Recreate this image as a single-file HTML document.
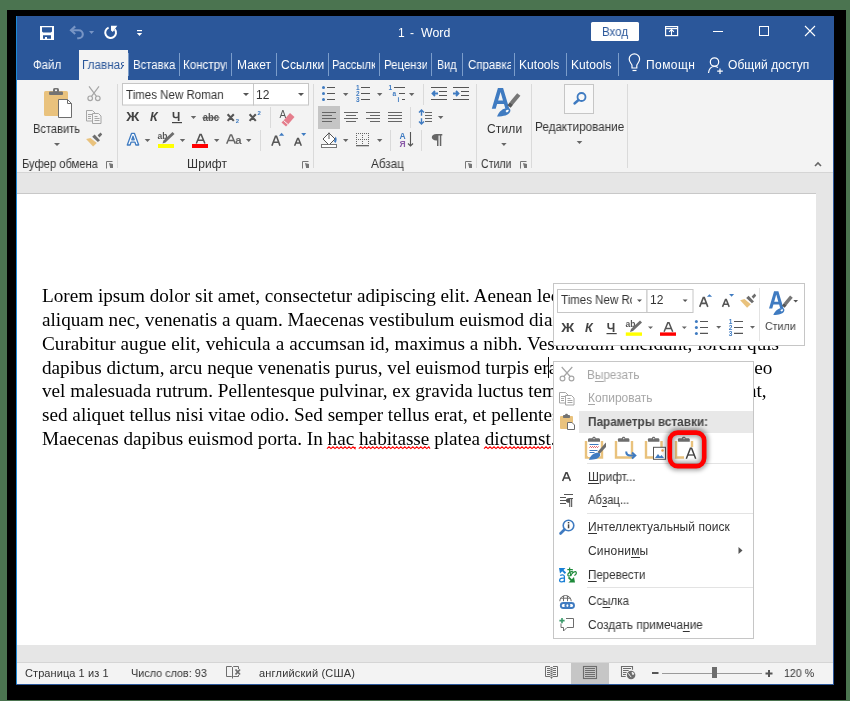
<!DOCTYPE html>
<html><head><meta charset="utf-8">
<style>
*{box-sizing:border-box;margin:0;padding:0}
html,body{width:850px;height:701px;overflow:hidden;background:#4b7450;font-family:"Liberation Sans",sans-serif}
.a{position:absolute}
.tx{position:absolute;white-space:nowrap;line-height:1}
.tx u{text-decoration:none;border-bottom:1px solid currentColor;display:inline-block;line-height:1;padding-bottom:0}
svg{position:absolute;overflow:visible}
.sep{position:absolute;width:1px;background:#6687ba}
.rs{position:absolute;width:1px;background:#dadada}
.dd{position:absolute;width:0;height:0;border-left:3px solid transparent;border-right:3px solid transparent;border-top:3px solid #666}
.ln{position:absolute;left:41.5px;white-space:nowrap;font-family:"Liberation Serif",serif;font-size:19.2px;line-height:19px;color:#000}
.tx,.ln,svg{will-change:transform}
</style></head><body>
<div class="a" style="left:7px;top:10px;width:839px;height:690px;background:#000"></div>
<div class="a" style="left:16px;top:16px;width:818px;height:669px;background:#e6e6e6"></div>
<!-- title + tabs -->
<div class="a" style="left:16px;top:16px;width:818px;height:64px;background:#2b579a"></div>
<div class="a" style="left:16px;top:16px;width:1px;height:669px;background:#1c8ad6"></div>
<div class="a" style="left:79px;top:50px;width:49px;height:30px;background:#f3f3f3"></div>
<!-- ribbon -->
<div class="a" style="left:17px;top:80px;width:816px;height:92px;background:#f3f3f3"></div>
<div class="a" style="left:17px;top:172px;width:816px;height:1px;background:#d5d5d5"></div>
<!-- page -->
<div class="a" style="left:17px;top:193px;width:799px;height:1px;background:#c8c8c8"></div>
<div class="a" style="left:17px;top:194px;width:799px;height:451px;background:#fff"></div>
<!-- status -->
<div class="a" style="left:17px;top:662px;width:816px;height:1px;background:#d5d5d5"></div>
<div class="a" style="left:17px;top:663px;width:816px;height:21px;background:#f3f3f3"></div>
<div class="a" style="left:16px;top:684px;width:818px;height:1px;background:#2b579a"></div>
<div class="a" style="left:833px;top:16px;width:1px;height:669px;background:#2b579a"></div>
<!-- save -->
<svg style="left:0;top:0" width="850" height="80" viewBox="0 0 850 80">
<g fill="#fff">
<path d="M40 26h14v14h-14z M42 27.2v4.2l1.1 1.1h7.8l1.1-1.1v-4.2z M43 35.3v3.5h2v-1.8h2v1.8h4v-3.5z" fill-rule="evenodd"/>
</g>
<!-- undo -->
<g fill="none" stroke="#7895c5" stroke-width="2.1">
<path d="M71.5 30.2h7.3a4 4 0 0 1 0 8h-1.6"/>
<path d="M75.2 26.4l-4.2 3.8 4.2 3.8"/>
</g>
<path d="M89 31h5.1l-2.55 3z" fill="#7895c5"/>
<!-- repeat -->
<path d="M108.6 27.6A5.4 5.4 0 1 0 114.9 29.3" fill="none" stroke="#fff" stroke-width="2"/>
<path d="M111 25.8h6.3l-4.5 6.2-1.8-1.6z" fill="#fff"/>
<!-- qat -->
<rect x="137" y="30" width="5" height="1.2" fill="#fff"/>
<path d="M136.8 33h5.4l-2.7 3z" fill="#fff"/>
<!-- sign in button -->
<rect x="591" y="22" width="48" height="19" rx="1.5" fill="#fff"/>
<!-- ribbon display options -->
<g fill="none" stroke="#fff" stroke-width="1.2">
<rect x="665.6" y="26.6" width="12" height="9"/>
</g>
<rect x="665" y="28" width="13" height="1.2" fill="#fff"/>
<path d="M671.5 29.5v6.3M669.1 31.9l2.4-2.4 2.4 2.4" fill="none" stroke="#fff" stroke-width="1.1"/>
<!-- min max close -->
<rect x="713" y="31" width="10" height="1" fill="#fff"/>
<rect x="759.5" y="26.5" width="9" height="9" fill="none" stroke="#fff" stroke-width="1"/>
<path d="M805 26l10 10M815 26l-10 10" stroke="#fff" stroke-width="1.1"/>
<!-- tab separators -->
<g fill="#7b9dcb">
<rect x="179" y="53" width="1" height="23"/>
<rect x="231" y="53" width="1" height="23"/>
<rect x="276" y="53" width="1" height="23"/>
<rect x="328" y="53" width="1" height="23"/>
<rect x="379" y="53" width="1" height="23"/>
<rect x="431" y="53" width="1" height="23"/>
<rect x="462" y="53" width="1" height="23"/>
<rect x="514" y="53" width="1" height="23"/>
<rect x="566" y="53" width="1" height="23"/>
<rect x="618" y="53" width="1" height="23"/>
<rect x="128" y="53" width="1" height="23"/>
</g>
<!-- lightbulb -->
<g fill="none" stroke="#fff" stroke-width="1.2">
<path d="M632 68v-2.5c0-1.5-2.8-3.2-2.8-6.5a5.2 5.2 0 0 1 10.4 0c0 3.3-2.8 5-2.8 6.5v2.5z"/>
<path d="M632.5 70.5h4"/>
</g>
<!-- person -->
<g fill="none" stroke="#fff" stroke-width="1.2">
<circle cx="714.5" cy="62" r="4.2"/>
<path d="M708.5 73c0.5-4 3-6.5 6-6.5c1.5 0 2.5 0.4 3.5 1"/>
<path d="M720 68.5v5.5M717.2 71.2h5.6"/>
</g>
</svg>

<svg style="left:0;top:0" width="850" height="180" viewBox="0 0 850 180">
<!-- group separators -->
<g fill="#dadada">
<rect x="117" y="84" width="1" height="84"/>
<rect x="313" y="84" width="1" height="84"/>
<rect x="476" y="84" width="1" height="84"/>
<rect x="531" y="84" width="1" height="84"/>
<rect x="627" y="84" width="1" height="84"/>
<rect x="270" y="107" width="1" height="21"/>
<rect x="260" y="130" width="1" height="21"/>
<rect x="423" y="84" width="1" height="21"/>
<rect x="410" y="107" width="1" height="21"/>
<rect x="390" y="130" width="1" height="21"/>
<rect x="421" y="130" width="1" height="21"/>
</g>
<!-- launchers -->
<g fill="none" stroke="#777" stroke-width="1">
<path d="M106.5 168.5v-7h6M302.5 168.5v-7h6M465.5 168.5v-7h6M520.5 168.5v-7h6"/>
</g>
<g fill="#777">
<path d="M109 163l4 4v-3zM109 163l4 4h-3z M305 163l4 4v-3zM305 163l4 4h-3z M468 163l4 4v-3zM468 163l4 4h-3z M523 163l4 4v-3zM523 163l4 4h-3z"/>
<rect x="110" y="166" width="3" height="2"/><rect x="306" y="166" width="3" height="2"/><rect x="469" y="166" width="3" height="2"/><rect x="524" y="166" width="3" height="2"/>
</g>
<!-- paste -->
<rect x="44" y="91" width="24" height="25" rx="1.5" fill="#e9c27d"/>
<rect x="49" y="91.5" width="14" height="3.5" rx="1" fill="#737373"/>
<rect x="53" y="88" width="6" height="4.5" rx="1.5" fill="#737373"/>
<rect x="55" y="89.5" width="2" height="1.6" fill="#f3f3f3"/>
<path d="M58.5 99.5h9l4 4v14h-13z" fill="#fff" stroke="#6d6d6d" stroke-width="1"/>
<path d="M67.5 99.5v4h4" fill="none" stroke="#6d6d6d" stroke-width="1"/>
<path d="M54 143h6l-3 3z" fill="#666"/>
<!-- scissors -->
<g fill="none" stroke="#a6a6a6" stroke-width="1.2">
<circle cx="90.2" cy="98.3" r="2.3"/><circle cx="97.8" cy="98.3" r="2.3"/>
<path d="M91.5 96.3l7.5-10M96.5 96.3l-7.5-10"/>
</g>
<!-- copy -->
<g fill="#f3f3f3" stroke="#a6a6a6" stroke-width="1">
<path d="M86.5 110.5h6l2.5 2.5v8h-8.5z"/>
<path d="M92.5 113.5h6l2.5 2.5v7.5h-8.5z"/>
</g>
<g stroke="#a6a6a6" stroke-width="1">
<path d="M88 114.5h4M88 116.5h3M88 118.5h3M94.5 118.5h5M94.5 120.5h5M94.5 116.5h3"/>
</g>
<!-- format painter -->
<path d="M86.1 139.1L90.5 137.9L96.8 143L93.1 146.6Z" fill="#e9c27d"/>
<path d="M92.2 136.7L94.6 134.6L100 140.3L97.9 142Z" fill="#6d6d6d"/>
<path d="M97.6 135.3L100.6 132.4L102.2 134.6L99.4 137.6Z" fill="#6d6d6d"/>
<!-- font name / size boxes -->
<rect x="122.5" y="83.5" width="131" height="21.5" fill="#fff" stroke="#c6c6c6" stroke-width="1"/>
<rect x="253.5" y="83.5" width="55" height="21.5" fill="#fff" stroke="#c6c6c6" stroke-width="1"/>
<g fill="#555">
<path d="M243 93h6l-3 3z"/><path d="M298 93h6l-3 3z"/>
</g>
<!-- dropdown arrows -->
<g fill="#666">
<path d="M190.8 116h5.4l-2.7 3z"/>
<path d="M144.7 139h5.6l-2.8 3z"/><path d="M179.8 139h5.4l-2.7 3z"/><path d="M214 139h5.4l-2.7 3z"/><path d="M246 139h5.4l-2.7 3z"/>
<path d="M343 93h5.4l-2.7 3z"/><path d="M377 93h5.4l-2.7 3z"/><path d="M409 93h5.4l-2.7 3z"/>
<path d="M438 116h5.4l-2.7 3z"/>
<path d="M343 139h5.4l-2.7 3z"/><path d="M377 139h5.4l-2.7 3z"/>
<path d="M501.2 143h5.4l-2.7 3z"/><path d="M576.7 141h5.6l-2.8 3z"/>
<path d="M815 166l3-3 3 3" fill="none" stroke="#666" stroke-width="1.6"/>
</g>
<!-- B I U -->
<text x="126.3" y="121" font-family="Liberation Sans" font-weight="700" font-size="12.5" fill="#444" textLength="13" lengthAdjust="spacingAndGlyphs">Ж</text>
<text x="150" y="121" font-family="Liberation Sans" font-weight="700" font-style="italic" font-size="12.5" fill="#444">К</text>
<text x="172" y="121" font-family="Liberation Sans" font-weight="700" font-size="12.5" fill="#444" textLength="8.3" lengthAdjust="spacingAndGlyphs">Ч</text>
<rect x="172" y="122" width="10" height="1.2" fill="#444"/>
<!-- abc strike -->
<text x="202.8" y="121" font-family="Liberation Sans" font-weight="700" font-size="11.5" fill="#555" textLength="16.2" lengthAdjust="spacingAndGlyphs">abc</text>
<rect x="202.5" y="117.3" width="17" height="1.1" fill="#555"/>
<!-- x2 x2 -->
<path d="M227.6 114.3l6.2 6.6M233.8 114.3l-6.2 6.6 M249.6 114.3l6.2 6.6M255.8 114.3l-6.2 6.6" stroke="#555" stroke-width="2.1"/>
<text x="235.8" y="123" font-family="Liberation Sans" font-weight="700" font-size="6" fill="#3f7bc1">2</text>
<text x="257.6" y="115" font-family="Liberation Sans" font-weight="700" font-size="6" fill="#3f7bc1">2</text>
<!-- clear formatting -->
<text x="279.5" y="118" font-family="Liberation Sans" font-size="10" fill="#555">A</text>
<path d="M283.5 120.5l6.5-7.5 4.5 4-6.5 7.5z" fill="#e57d8c"/>
<path d="M281.5 122.5l2-2 4.5 4-2 2z" fill="#e57d8c"/>
<path d="M283.5 120.5l4.5 4" stroke="#f3f3f3" stroke-width="1"/>
<!-- text effects A -->
<path d="M127.3 145L131.6 133.3H134.4L138.7 145H135.9L135 142.2H131L130.1 145Z M131.8 139.8H134.2L133 136.2Z" fill="#fff" stroke="#3f7bc1" stroke-width="1.3" stroke-linejoin="round" fill-rule="evenodd"/>
<!-- highlighter -->
<text x="157.6" y="138.5" font-family="Liberation Sans" font-weight="700" font-size="8.5" fill="#555">ab</text>
<path d="M162.5 143.5l1-3 9-8.5 2 2-9 8.5z" fill="#6d6d6d"/>
<rect x="158" y="144" width="16" height="4" fill="#ffff00"/>
<!-- font color -->
<path d="M196.3 143.5L200 134.6H201.2L204.9 143.5 M197.8 140.3h5.6" fill="none" stroke="#555" stroke-width="1.5"/>
<rect x="192" y="144" width="16" height="4" fill="#f00"/>
<!-- Aa -->
<path d="M226.7 143.7L230.4 135H231.6L235.3 143.7 M228.2 140.5h5.6" fill="none" stroke="#666" stroke-width="1.5"/>
<text x="235.2" y="143.7" font-family="Liberation Sans" font-weight="700" font-size="10" fill="#666" textLength="6.3" lengthAdjust="spacingAndGlyphs">a</text>
<!-- grow / shrink -->
<path d="M271.9 145.7L275.5 136.3H276.5L280 145.7 M273.5 142.2h5" fill="none" stroke="#555" stroke-width="1.6"/>
<path d="M279 135.8l2.6-3 2.6 3z" fill="#3f7bc1"/>
<path d="M294.6 145.7L297.6 138.5H298.4L301.3 145.7 M295.9 143h4.2" fill="none" stroke="#555" stroke-width="1.5"/>
<path d="M301.2 132.9h5l-2.5 3z" fill="#3f7bc1"/>
<!-- bullets -->
<g fill="#3f7bc1"><circle cx="323.5" cy="87.5" r="1.5"/><circle cx="323.5" cy="93.5" r="1.5"/><circle cx="323.5" cy="99.5" r="1.5"/></g>
<g stroke="#555" stroke-width="1.1"><path d="M327 87.5h8M327 93.5h8M327 99.5h8"/></g>
<!-- numbering -->
<g font-family="Liberation Sans" font-weight="700" font-size="6.5" fill="#3f7bc1">
<text x="356" y="90">1</text><text x="356" y="96">2</text><text x="356" y="102">3</text>
<text x="388.5" y="90">1</text><text x="392.5" y="96">a</text><text x="397.5" y="102">i</text>
</g>
<g stroke="#555" stroke-width="1.1"><path d="M361 87.5h9M361 93.5h9M361 99.5h9 M394 87.5h11M399 93.5h6M402 99.5h3"/></g>
<!-- indent -->
<g stroke="#555" stroke-width="1.1"><path d="M431 87.5h16M439 91.5h8M439 95.5h8M431 99.5h16 M453 87.5h16M461 91.5h8M461 95.5h8M453 99.5h16"/></g>
<g fill="none" stroke="#3f7bc1" stroke-width="1.8"><path d="M438 93.5h-5.5M435 91l-2.5 2.5 2.5 2.5 M453 93.5h5.5M456 91l2.5 2.5-2.5 2.5"/></g>
<!-- align -->
<rect x="318" y="106" width="22" height="23" fill="#c5c5c5"/>
<g stroke="#666" stroke-width="1.1">
<path d="M322 112.5h14M322 115.5h10M322 118.5h14M322 121.5h10"/>
<path d="M344 112.5h14M346 115.5h10M344 118.5h14M346 121.5h10"/>
<path d="M366 112.5h14M370 115.5h10M366 118.5h14M370 121.5h10"/>
<path d="M388 112.5h14M388 115.5h14M388 118.5h14M388 121.5h14"/>
<path d="M425 112.5h7M425 115.5h7M425 118.5h7M425 121.5h7"/>
</g>
<g fill="none" stroke="#3f7bc1" stroke-width="1.4"><path d="M421.5 110v5.8M421.5 118.2v5.8M419 112.5l2.5-2.5 2.5 2.5M419 121.5l2.5 2.5 2.5-2.5"/></g>
<!-- shading -->
<path d="M329 133l6 6-6 6-6-6z" fill="#fff" stroke="#555" stroke-width="1"/>
<path d="M329 139v-6.5" stroke="#555" stroke-width="1"/>
<path d="M335.5 136.5c1.5 1.5 1.5 4 0 6.5l-1.5-1.5z" fill="#3f7bc1"/>
<rect x="321.5" y="144.5" width="15" height="3" fill="#fff" stroke="#777" stroke-width="1"/>
<!-- borders -->
<g fill="#666"><path d="M356 133h1v1h-1zM356 139h1v1h-1zM358 133h1v1h-1zM358 139h1v1h-1zM360 133h1v1h-1zM360 139h1v1h-1zM362 133h1v1h-1zM362 139h1v1h-1zM364 133h1v1h-1zM364 139h1v1h-1zM366 133h1v1h-1zM366 139h1v1h-1zM368 133h1v1h-1zM368 139h1v1h-1zM356 135h1v1h-1zM362 135h1v1h-1zM368 135h1v1h-1zM356 137h1v1h-1zM362 137h1v1h-1zM368 137h1v1h-1zM356 139h1v1h-1zM362 139h1v1h-1zM368 139h1v1h-1zM356 141h1v1h-1zM362 141h1v1h-1zM368 141h1v1h-1zM356 143h1v1h-1zM362 143h1v1h-1zM368 143h1v1h-1z"/>
<rect x="356" y="145" width="13" height="1.3"/></g>
<!-- sort -->
<text x="399.5" y="138.7" font-family="Liberation Sans" font-weight="700" font-size="8.5" fill="#3f7bc1">A</text>
<text x="399.5" y="146.6" font-family="Liberation Sans" font-weight="700" font-size="8.5" fill="#8a5aa8">Я</text>
<g fill="none" stroke="#555" stroke-width="1.1"><path d="M410.5 132v14M408 143.5l2.5 2.5 2.5-2.5"/></g>
<!-- pilcrow -->
<path d="M438.5 134h3.8v1.5h-1v10.6h-1.5v-10.6h-1.3v10.6h-1.5v-5.6h-0.6c-2.8 0-4.6-1.3-4.6-3.2s1.8-3.3 4.6-3.3z" fill="#666"/>
<!-- styles -->
<path d="M491.8 108.8L497.9 88H503.1L509.3 108.8H505.4L504 104H497.1L495.7 108.8Z M498.1 100.6H503L500.55 92Z" fill="#3f7bc1" fill-rule="evenodd"/>
<path d="M518.8 94.5l-7.5 9" stroke="#777" stroke-width="4.2"/>
<path d="M511.5 103.5l-2.5 3" stroke="#555" stroke-width="4.2"/>
<path d="M497 116.6c2-5 6-8.5 10.5-8.5 2.5 0 3.5 2 2.5 4-1.5 3-6 4.5-13 4.5z" fill="#3f7bc1"/>
<path d="M505.5 111c1-1.2 2.5-1.5 3.2-1 0.3 0.8-0.5 2-2 2.5z" fill="#fff"/>
<!-- editing search -->
<rect x="564.5" y="84.5" width="29" height="29" fill="#f8f8f8" stroke="#c6c6c6" stroke-width="1"/>
<circle cx="581.5" cy="97" r="4" fill="none" stroke="#3f7bc1" stroke-width="1.8"/>
<path d="M578.5 100l-4 3.5" stroke="#3f7bc1" stroke-width="2.4" stroke-linecap="round"/>
</svg>

<div class="ln" style="top:286px">Lorem ipsum dolor sit amet, consectetur adipiscing elit. Aenean leo ligula, rhoncus eget tristique</div>
<div class="ln" style="top:310px">aliquam nec, venenatis a quam. Maecenas vestibulum euismod diam, sed luctus lectus gravida a.</div>
<div class="ln" style="top:334px;word-spacing:0.2px">Curabitur augue elit, vehicula a accumsan id, maximus a nibh. Vestibulum tincidunt, lorem quis</div>
<div class="ln" style="top:358px">dapibus dictum, arcu neque venenatis purus, vel euismod turpis erat in ante. Integer ac mi</div>
<div class="ln" style="top:381px">vel malesuada rutrum. Pellentesque pulvinar, ex gravida luctus tempus, nibh mi feugiat</div>
<div class="ln" style="top:405px">sed aliquet tellus nisi vitae odio. Sed semper tellus erat, et pellentesque lorem dictum et.</div>
<div class="ln" style="top:429px">Maecenas dapibus euismod porta. In hac habitasse platea dictumst.</div>
<div class="a" style="left:548px;top:357px;width:1px;height:21px;background:#000"></div>
<div class="ln" style="top:358px;left:748.5px">leo</div>
<div class="ln" style="top:381px;left:747.5px">at,</div>
<svg style="left:0;top:0" width="850" height="701" viewBox="0 0 850 701"><path d="M327 448.6L329.0 446.8L331.0 448.6L333.0 446.8L335.0 448.6L337.0 446.8L339.0 448.6L341.0 446.8L343.0 448.6L345.0 446.8L347.0 448.6L349.0 446.8L351.0 448.6L353.0 446.8L355.0 448.6L355.3 446.8 M358.8 448.6L360.8 446.8L362.8 448.6L364.8 446.8L366.8 448.6L368.8 446.8L370.8 448.6L372.8 446.8L374.8 448.6L376.8 446.8L378.8 448.6L380.8 446.8L382.8 448.6L384.8 446.8L386.8 448.6L388.8 446.8L390.8 448.6L392.8 446.8L394.8 448.6L396.8 446.8L398.8 448.6L400.8 446.8L402.8 448.6L404.8 446.8L406.8 448.6L408.8 446.8L410.8 448.6L412.8 446.8L414.8 448.6L416.8 446.8L418.8 448.6L420.8 446.8L422.8 448.6L424.8 446.8L426.8 448.6L428.8 446.8L430.0 448.6 M484 448.6L486.0 446.8L488.0 448.6L490.0 446.8L492.0 448.6L494.0 446.8L496.0 448.6L498.0 446.8L500.0 448.6L502.0 446.8L504.0 448.6L506.0 446.8L508.0 448.6L510.0 446.8L512.0 448.6L514.0 446.8L516.0 448.6L518.0 446.8L520.0 448.6L522.0 446.8L524.0 448.6L526.0 446.8L528.0 448.6L530.0 446.8L532.0 448.6L534.0 446.8L536.0 448.6L538.0 446.8L540.0 448.6L542.0 446.8L544.0 448.6L546.0 446.8L548.0 448.6L550.0 446.8L550.5 448.6" fill="none" stroke="#ff0000" stroke-width="1.1"/></svg>

<svg style="left:0;top:0" width="850" height="701" viewBox="0 0 850 701">
<rect x="571" y="663" width="38" height="21" fill="#c6c6c6"/>
<g fill="none" stroke="#6d6d6d" stroke-width="1">
<!-- proofing -->
<path d="M232.5 667.5l-1-1h-5v10h5l1 1 1-1h5v-10h-5z M232.5 667.5v11" />
<!-- read mode -->
<path d="M550 666.5h-4.5v10h4.5 M553 666.5h4.5v10h-4.5" />
<path d="M547 668.5h3M547 670.5h3M547 672.5h3M547 674.5h3M553 668.5h3M553 670.5h3M553 672.5h3M553 674.5h3"/>
</g>
<rect x="235" y="669" width="5.5" height="6" fill="#f3f3f3"/>
<path d="M235.5 669.5l4.5 5M240 669.5l-4.5 5" stroke="#6d6d6d" stroke-width="1.8"/>
<path d="M550.5 667h2v10.5l-1 1.5-1-1.5z" fill="#6d6d6d"/>
<path d="M550.5 668.5h2M550.5 670.5h2M550.5 672.5h2M550.5 674.5h2M550.5 676.5h2" stroke="#f3f3f3" stroke-width="0.6"/>
<!-- print layout -->
<rect x="583.5" y="666.5" width="13" height="12" fill="none" stroke="#6d6d6d" stroke-width="1.1"/>
<path d="M585 668.5h10M585 670.5h10M585 672.5h10M585 674.5h10M585 676.5h10" stroke="#6d6d6d" stroke-width="1"/>
<!-- web layout -->
<path d="M625.7 676.5h-4.2v-10h11v3.2" fill="none" stroke="#6d6d6d" stroke-width="1.1"/>
<path d="M623 668.5h8M623 670.5h5.7M623 672.5h3.6M623 674.5h2.9" stroke="#6d6d6d" stroke-width="1"/>
<circle cx="631.1" cy="675" r="4.3" fill="#6d6d6d"/>
<path d="M628.4 673.3c0.8 1.5 1.5 2.5 2.8 3.8M632 672.2c1 0.2 1.6 0.8 2 1.8l-1.4 0.4z" stroke="#f3f3f3" stroke-width="0.9" fill="#f3f3f3"/>
<!-- zoom -->
<rect x="652" y="672" width="6.5" height="2" fill="#555"/>
<rect x="662" y="673" width="100" height="1" fill="#9a9a9a"/>
<rect x="712" y="667" width="5" height="11" fill="#6d6d6d"/>
<rect x="765.5" y="672.5" width="7" height="2" fill="#555"/>
<rect x="768" y="670" width="2" height="7" fill="#555"/>
</svg>

<div class="a" style="left:553px;top:283px;width:252px;height:63px;background:#fff;border:1px solid #c6c6c6"></div>
<svg style="left:0;top:0" width="850" height="701" viewBox="0 0 850 701">
<rect x="557.5" y="289.5" width="89.5" height="23" fill="#fff" stroke="#c6c6c6" stroke-width="1"/>
<rect x="647" y="289.5" width="46" height="23" fill="#fff" stroke="#c6c6c6" stroke-width="1"/>
<g fill="#555"><path d="M637 299.5h5l-2.5 2.5z"/><path d="M682.6 299.5h5l-2.5 2.5z"/></g>
<rect x="759" y="288" width="1" height="53" fill="#e3e3e3"/>
<!-- grow shrink -->
<path d="M699.7 306.9L703.3 297.6H704.3L707.8 306.9 M701.3 303.4h5" fill="none" stroke="#555" stroke-width="1.6"/>
<path d="M706.9 296.8l2.6-2.6 2.6 2.6z" fill="#3f7bc1"/>
<path d="M722.5 306.9L725.5 299.6H726.3L729.2 306.9 M723.8 304.2h4.2" fill="none" stroke="#555" stroke-width="1.5"/>
<path d="M729.1 294.1h5l-2.5 2.7z" fill="#3f7bc1"/>
<!-- format painter -->
<path d="M 740.1 300.3 L 744.5 299.1 L 750.8 304.2 L 747.1 307.8 Z" fill="#e9c27d"/>
<path d="M 746.2 297.9 L 748.6 295.8 L 754.0 301.5 L 751.9 303.2 Z" fill="#6d6d6d"/>
<path d="M 751.6 296.5 L 754.6 293.6 L 756.2 295.8 L 753.4 298.8 Z" fill="#6d6d6d"/>
<!-- styles -->
<g transform="translate(360.81,218.16) scale(0.83)">
<path d="M491.8 108.8L497.9 88H503.1L509.3 108.8H505.4L504 104H497.1L495.7 108.8Z M498.1 100.6H503L500.55 92Z" fill="#3f7bc1" fill-rule="evenodd"/>
<path d="M518.8 94.5l-7.5 9" stroke="#777" stroke-width="4.2"/>
<path d="M511.5 103.5l-2.5 3" stroke="#555" stroke-width="4.2"/>
<path d="M497 116.6c2-5 6-8.5 10.5-8.5 2.5 0 3.5 2 2.5 4-1.5 3-6 4.5-13 4.5z" fill="#3f7bc1"/>
<path d="M505.5 111c1-1.2 2.5-1.5 3.2-1 0.3 0.8-0.5 2-2 2.5z" fill="#fff"/>
</g>
<path d="M793.3 300h4.8l-2.4 2.5z" fill="#555"/>
<!-- B I U -->
<text x="561.3" y="331.9" font-family="Liberation Sans" font-weight="700" font-size="12.5" fill="#444" textLength="13" lengthAdjust="spacingAndGlyphs">Ж</text>
<text x="585" y="331.9" font-family="Liberation Sans" font-weight="700" font-style="italic" font-size="12.5" fill="#444">К</text>
<text x="606.8" y="331.9" font-family="Liberation Sans" font-weight="700" font-size="12.5" fill="#444" textLength="8.5" lengthAdjust="spacingAndGlyphs">Ч</text>
<rect x="606.5" y="333" width="10.2" height="1.2" fill="#444"/>
<!-- highlighter -->
<text x="625.6" y="327" font-family="Liberation Sans" font-weight="700" font-size="8.5" fill="#555">ab</text>
<path d="M630 332l1-3 9-8.5 2 2-9 8.5z" fill="#6d6d6d"/>
<rect x="625.8" y="332.4" width="16.2" height="3.4" fill="#ffff00"/>
<path d="M648 326.5h5l-2.5 2.5z" fill="#666"/>
<!-- font color -->
<path d="M664.1 331.8L667.8 322.7H669L672.7 331.8 M665.6 328.6h5.6" fill="none" stroke="#555" stroke-width="1.5"/>
<rect x="660" y="332.4" width="16" height="3.4" fill="#f00"/>
<path d="M681.8 326.5h5l-2.5 2.5z" fill="#666"/>
<!-- bullets -->
<g fill="#3f7bc1"><circle cx="696.4" cy="321.5" r="1.5"/><circle cx="696.4" cy="327.5" r="1.5"/><circle cx="696.4" cy="333.4" r="1.5"/></g>
<g stroke="#555" stroke-width="1.1"><path d="M700 321.5h8M700 327.5h8M700 333.4h8 M734 321.5h9M734 327.5h9M734 333.4h9"/></g>
<g font-family="Liberation Sans" font-weight="700" font-size="6.5" fill="#3f7bc1"><text x="728.7" y="324">1</text><text x="728.7" y="330">2</text><text x="728.7" y="336">3</text></g>
<g fill="#666"><path d="M716.2 326.1h5l-2.5 2.6z"/><path d="M750 326.1h5l-2.5 2.6z"/></g>
</svg>

<div class="a" style="left:553px;top:361px;width:201px;height:278px;background:#fff;border:1px solid #c6c6c6"></div>
<div class="a" style="left:579px;top:411px;width:174px;height:22px;background:#e8e8e8"></div>
<svg style="left:0;top:0" width="850" height="701" viewBox="0 0 850 701">
<!-- separators -->
<g fill="#e3e3e3">
<rect x="587" y="463" width="166" height="1"/>
<rect x="587" y="513" width="166" height="1"/>
<rect x="587" y="587" width="166" height="1"/>
</g>
<!-- scissors -->
<g fill="none" stroke="#a6a6a6" stroke-width="1.2">
<circle cx="562.5" cy="378.5" r="2.4"/><circle cx="571.5" cy="378.5" r="2.4"/>
<path d="M563.8 376.5l8.5-9.5M570.2 376.5l-8.5-9.5"/>
</g>
<!-- copy -->
<g fill="#fff" stroke="#a6a6a6" stroke-width="1">
<path d="M559.5 392.5h6l2.5 2.5v8h-8.5z"/>
<path d="M565.5 395.5h6l2.5 2.5v7h-8.5z"/>
</g>
<g stroke="#a6a6a6" stroke-width="1"><path d="M561 396.5h4M561 398.5h3M561 400.5h3M567.5 400.5h5M567.5 402.5h5M567.5 398.5h3"/></g>
<!-- header paste icon -->
<rect x="560" y="416" width="13" height="13" rx="1" fill="#e9c27d"/>
<rect x="563" y="415" width="7" height="3" rx="0.8" fill="#737373"/>
<rect x="565.2" y="413.8" width="2.6" height="2" rx="0.8" fill="#737373"/>
<path d="M567.5 422.5h4.5l2.5 2.5v4.5h-7z" fill="#fff" stroke="#6d6d6d" stroke-width="1"/>
<!-- paste option 1 -->
<g fill="none" stroke="#e9c27d" stroke-width="2.4">
<path d="M586 441v16.5h16v-16.5"/>
<path d="M616 441v16.5h16v-16.5"/>
<path d="M646 441v16.5h15.5v-16.5"/>
<path d="M676 441v16.5h16v-16.5"/>
</g>
<g fill="#6d6d6d">
<path d="M588 441.8h12v-2.2c0-0.8-0.6-1.4-1.4-1.4h-3c0-1-0.8-1.4-1.6-1.4s-1.6 0.4-1.6 1.4h-3c-0.8 0-1.4 0.6-1.4 1.4z"/>
<path d="M618.2 441.8h11.2v-2.2c0-0.8-0.6-1.4-1.4-1.4h-2.8c0-1-0.8-1.4-1.6-1.4s-1.6 0.4-1.6 1.4h-2.8c-0.8 0-1.4 0.6-1.4 1.4z"/>
<path d="M648.2 441.8h11.2v-2.2c0-0.8-0.6-1.4-1.4-1.4h-2.8c0-1-0.8-1.4-1.6-1.4s-1.6 0.4-1.6 1.4h-2.8c-0.8 0-1.4 0.6-1.4 1.4z"/>
<path d="M678.2 441.8h11.6v-2.2c0-0.8-0.6-1.4-1.4-1.4h-2.8c0-1-0.8-1.4-1.8-1.4s-1.8 0.4-1.8 1.4h-2.8c-0.8 0-1.4 0.6-1.4 1.4z"/>
</g>
<g fill="#fff"><circle cx="594" cy="438.6" r="0.7"/><circle cx="623.8" cy="438.6" r="0.7"/><circle cx="653.8" cy="438.6" r="0.7"/><circle cx="684" cy="438.6" r="0.7"/></g>
<!-- opt1 contents -->
<rect x="588" y="442" width="12" height="15" fill="#fff"/>
<g stroke="#3f7bc1" stroke-width="1"><path d="M589.5 444.5h9M589.5 450.5h8M589.5 452.5h5"/></g>
<path d="M589.5 447.5l1 -1 1 1 1-1 1 1 1-1 1 1 1-1 1 1 1-1" fill="none" stroke="#d9363e" stroke-width="1"/>
<path d="M597.5 452l7.5-8.5 1-1v4.5l-6.5 7z" fill="#6d6d6d"/>
<path d="M588.8 459.8c2-4.5 5-7 9-7 2 0 3 1.6 2 3.5-1.4 2.5-5 3.5-11 3.5z" fill="#3f7bc1"/>
<!-- opt2 arrow -->
<path d="M626.2 451.5c0 2.5 1.5 4 4 4h4.5" fill="none" stroke="#3f7bc1" stroke-width="2"/>
<path d="M632 452.5l3.3 3-3.3 3" fill="none" stroke="#3f7bc1" stroke-width="2"/>
<!-- opt3 picture -->
<rect x="653.5" y="447.3" width="12" height="12" fill="#fff" stroke="#555" stroke-width="1"/>
<path d="M655 458l3-4 2 2.5 1.5-1.5 2.5 3z" fill="#3f7bc1"/>
<circle cx="662.5" cy="450.5" r="1.2" fill="#e9a04a"/>
<!-- opt4 A -->
<rect x="684" y="447" width="13" height="13" fill="#fff"/>
<path d="M686.3 458.7L690.4 448.3H691.6L695.7 458.7" fill="none" stroke="#444" stroke-width="1.5"/>
<path d="M688 455h6" stroke="#444" stroke-width="1.3"/>
<!-- red highlight -->
<rect x="669.8" y="432.6" width="34.4" height="33.5" rx="8" fill="none" stroke="rgba(0,0,0,0.35)" stroke-width="9" filter="url(#blur)"/>
<rect x="669.8" y="432.6" width="34.4" height="33.5" rx="8" fill="none" stroke="#ff0000" stroke-width="4.6"/>
<defs><filter id="blur" x="-50%" y="-50%" width="200%" height="200%"><feGaussianBlur stdDeviation="2.2"/></filter></defs>
<!-- font A -->
<path d="M562.6 481L566 472.8H567L570.4 481 M563.9 478h5.2" fill="none" stroke="#444" stroke-width="1.6"/>
<!-- paragraph icon -->
<g stroke="#555" stroke-width="1"><path d="M564 494.5h9M560 497.5h6M560 500.5h6M560 503.5h6"/></g>
<path d="M569.5 498h3.5v1h-0.8v8h-1.1v-8h-0.8v8h-1.1v-4.2c-2.2 0-3.3-1-3.3-2.4s1.2-2.4 3.6-2.4z" fill="#555"/>
<!-- smart lookup -->
<circle cx="568.5" cy="525.5" r="5.3" fill="#fff" stroke="#3f7bc1" stroke-width="1.6"/>
<path d="M564.5 529.5l-4 4" stroke="#3f7bc1" stroke-width="2.6" stroke-linecap="round"/>
<rect x="567.8" y="522" width="1.5" height="1.4" fill="#444"/><rect x="567.8" y="524.3" width="1.5" height="4" fill="#444"/>
<!-- translate -->
<path d="M559 568h6.5l-2 2 2.6 2.6-1.3 1.3-2.6-2.6-2.2 2.2z" fill="#1a7fd6"/>
<path d="M560.2 575.5c1.5-1 4-1 4.2 1v5.8M564.4 578.2c-2.8-0.5-4.8 0.3-4.8 2.2c0 1.8 2.8 2 4.8 0.3" fill="none" stroke="#1a7fd6" stroke-width="1.3"/>
<g fill="none" stroke="#1e8a3a" stroke-width="1.2">
<path d="M567.3 569.6h5.5"/>
<path d="M569.6 567.5c-0.3 3 0.2 6.2 1.6 8.6"/>
<path d="M572.8 571.3c-3.2 0.3-5.3 2.2-5 3.8 0.3 1.4 2.2 1.2 3.5-0.6 1.2-1.7 2.3-3 4-2.8 1.6 0.3 1.4 2.8-1 3.8"/>
</g>
<path d="M575 582.6h-6.5l2-2-2.6-2.6 1.3-1.3 2.6 2.6 2.2-2.2z" fill="#1e8a3a"/>
<!-- link -->
<path d="M559.8 601.2a5.7 5.7 0 0 1 11.4 0 M560.5 598.2h10 M563.5 596v5.2M567.5 596v5.2" fill="none" stroke="#6d6d6d" stroke-width="1"/>
<g fill="none" stroke="#3f7bc1" stroke-width="1.9">
<rect x="560.8" y="603" width="8.6" height="5" rx="2.5"/>
<rect x="565.4" y="603" width="8.6" height="5" rx="2.5"/>
</g>
<!-- comment -->
<path d="M566 618.5h7.5v9h-6.5l-3.5 3.5v-3.5h-2.5v-4" fill="none" stroke="#6d6d6d" stroke-width="1"/>
<path d="M562 618v5.2M559.4 620.6h5.2" stroke="#3a9a6a" stroke-width="1.6"/>
<!-- submenu arrow -->
<path d="M738.5 547l4 3.5-4 3.5z" fill="#555"/>
</svg>

<div class="tx" style='left:397.50px;top:26.84px;font-size:12px;color:#fff;'>1</div>
<div class="tx" style='left:410.20px;top:26.84px;font-size:12px;color:#fff;'>-</div>
<div class="tx" style='left:421.00px;top:26.59px;font-size:12.3px;color:#fff;letter-spacing:0.043px;'>Word</div>
<div class="tx" style='left:601.60px;top:25.84px;font-size:12px;color:#2b579a;transform:scaleX(0.9574);transform-origin:0 0;'>Вход</div>
<div class="tx" style='left:33.30px;top:58.84px;font-size:12px;color:#fff;transform:scaleX(0.9554);transform-origin:0 0;'>Файл</div>
<div class="tx" style='left:81.70px;top:58.84px;font-size:12px;color:#2b579a;transform:scaleX(0.9740);transform-origin:0 0;width:42.7px;overflow:hidden;'>Главная</div>
<div class="tx" style='left:132.80px;top:58.84px;font-size:12px;color:#fff;transform:scaleX(0.9460);transform-origin:0 0;'>Вставка</div>
<div class="tx" style='left:183.00px;top:58.84px;font-size:12px;color:#fff;transform:scaleX(0.9646);transform-origin:0 0;width:46.1px;overflow:hidden;'>Конструктор</div>
<div class="tx" style='left:236.60px;top:58.84px;font-size:12px;color:#fff;letter-spacing:0.008px;'>Макет</div>
<div class="tx" style='left:280.80px;top:58.84px;font-size:12px;color:#fff;letter-spacing:0.210px;'>Ссылки</div>
<div class="tx" style='left:332.40px;top:58.84px;font-size:12px;color:#fff;transform:scaleX(0.9283);transform-origin:0 0;width:46.4px;overflow:hidden;'>Рассылки</div>
<div class="tx" style='left:384.30px;top:58.84px;font-size:12px;color:#fff;transform:scaleX(0.9496);transform-origin:0 0;width:45.0px;overflow:hidden;'>Рецензирование</div>
<div class="tx" style='left:437.20px;top:58.84px;font-size:12px;color:#fff;transform:scaleX(0.8932);transform-origin:0 0;'>Вид</div>
<div class="tx" style='left:467.60px;top:58.84px;font-size:12px;color:#fff;transform:scaleX(0.9559);transform-origin:0 0;width:44.9px;overflow:hidden;'>Справка</div>
<div class="tx" style='left:519.00px;top:58.84px;font-size:12px;color:#fff;letter-spacing:0.045px;'>Kutools</div>
<div class="tx" style='left:570.60px;top:58.84px;font-size:12px;color:#fff;letter-spacing:0.095px;'>Kutools</div>
<div class="tx" style='left:646.00px;top:58.84px;font-size:12px;color:#fff;letter-spacing:0.433px;'>Помощн</div>
<div class="tx" style='left:728.00px;top:58.84px;font-size:12px;color:#fff;letter-spacing:0.052px;'>Общий доступ</div>
<div class="tx" style='left:125.60px;top:88.84px;font-size:12px;color:#333;transform:scaleX(0.9608);transform-origin:0 0;'>Times New Roman</div>
<div class="tx" style='left:256.00px;top:88.84px;font-size:12px;color:#333;'>12</div>
<div class="tx" style='left:32.70px;top:122.84px;font-size:12px;color:#333;transform:scaleX(0.9258);transform-origin:0 0;'>Вставить</div>
<div class="tx" style='left:21.70px;top:157.84px;font-size:12px;color:#333;transform:scaleX(0.9308);transform-origin:0 0;'>Буфер обмена</div>
<div class="tx" style='left:187.00px;top:157.84px;font-size:12px;color:#333;letter-spacing:0.129px;'>Шрифт</div>
<div class="tx" style='left:371.30px;top:157.84px;font-size:12px;color:#333;transform:scaleX(0.9800);transform-origin:0 0;'>Абзац</div>
<div class="tx" style='left:487.40px;top:122.84px;font-size:12px;color:#333;letter-spacing:0.155px;'>Стили</div>
<div class="tx" style='left:480.90px;top:157.84px;font-size:12px;color:#333;transform:scaleX(0.8821);transform-origin:0 0;'>Стили</div>
<div class="tx" style='left:534.60px;top:120.84px;font-size:12px;color:#333;transform:scaleX(0.9757);transform-origin:0 0;'>Редактирование</div>
<div class="tx" style='left:25.30px;top:667.69px;font-size:11px;color:#333;letter-spacing:0.075px;'>Страница 1 из 1</div>
<div class="tx" style='left:130.90px;top:667.69px;font-size:11px;color:#333;transform:scaleX(0.9838);transform-origin:0 0;'>Число слов: 93</div>
<div class="tx" style='left:258.60px;top:667.69px;font-size:11px;color:#333;letter-spacing:0.198px;'>английский (США)</div>
<div class="tx" style='left:783.50px;top:667.69px;font-size:11px;color:#333;transform:scaleX(0.9646);transform-origin:0 0;'>120 %</div>
<div class="tx" style='left:560.70px;top:293.84px;font-size:12px;color:#333;transform:scaleX(0.9608);transform-origin:0 0;width:74.2px;overflow:hidden;'>Times New Roman</div>
<div class="tx" style='left:649.80px;top:293.84px;font-size:12px;color:#333;'>12</div>
<div class="tx" style='left:764.50px;top:321.27px;font-size:11.5px;color:#444;transform:scaleX(0.9264);transform-origin:0 0;'>Стили</div>
<div class="tx" style='left:586.50px;top:368.84px;font-size:12px;color:#a6a6a6;transform:scaleX(0.9799);transform-origin:0 0;'>В<u>ы</u>резать</div>
<div class="tx" style='left:587.50px;top:391.84px;font-size:12px;color:#a6a6a6;transform:scaleX(0.9981);transform-origin:0 0;'><u>К</u>опировать</div>
<div class="tx" style='left:588.40px;top:415.84px;font-size:12px;color:#444;font-weight:700;transform:scaleX(0.9792);transform-origin:0 0;'>Параметры вставки:</div>
<div class="tx" style='left:587.50px;top:470.84px;font-size:12px;color:#333;transform:scaleX(0.9884);transform-origin:0 0;'><u>Ш</u>рифт...</div>
<div class="tx" style='left:587.50px;top:493.84px;font-size:12px;color:#333;transform:scaleX(0.9388);transform-origin:0 0;'>Аб<u>з</u>ац...</div>
<div class="tx" style='left:587.50px;top:520.84px;font-size:12px;color:#333;letter-spacing:0.043px;'><u>И</u>нтеллектуальный поиск</div>
<div class="tx" style='left:587.50px;top:544.84px;font-size:12px;color:#333;letter-spacing:0.189px;'>Синони<u>м</u>ы</div>
<div class="tx" style='left:587.50px;top:568.84px;font-size:12px;color:#333;transform:scaleX(0.9604);transform-origin:0 0;'><u>П</u>еревести</div>
<div class="tx" style='left:587.50px;top:594.84px;font-size:12px;color:#333;transform:scaleX(0.9651);transform-origin:0 0;'>Сс<u>ы</u>лка</div>
<div class="tx" style='left:587.50px;top:618.84px;font-size:12px;color:#333;transform:scaleX(0.9873);transform-origin:0 0;'>Создать примеча<u>н</u>ие</div>
</body></html>
